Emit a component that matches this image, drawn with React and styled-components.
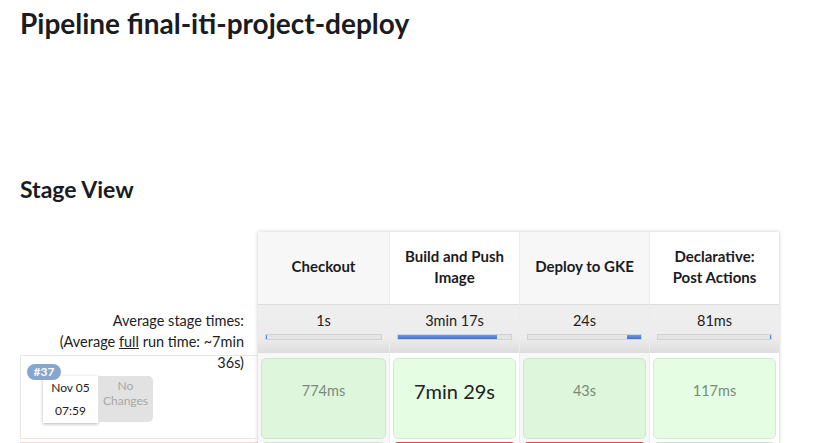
import React from 'react'
import styled, { createGlobalStyle } from 'styled-components'

const GlobalStyle = createGlobalStyle`
  body {
    margin: 0;
    background: #fff;
    color: #1b1b22;
    font-family: Lato, "Noto Sans", sans-serif;
    overflow: hidden;
  }
`

const Page = styled.div`
  padding: 0 20px;
`

const Title = styled.h1`
  font-size: 28px;
  line-height: 34px;
  font-weight: 700;
  margin: 6px 0 0;
`

const SectionTitle = styled.h2`
  font-size: 23px;
  line-height: 28px;
  font-weight: 700;
  margin: 135px 0 0;
`

const StageView = styled.div`
  display: flex;
  margin-top: 29px;
  font-size: 14.5px;
`

const Labels = styled.div`
  width: 238px;
  display: flex;
  flex-direction: column;
`

const LabelHead = styled.div`
  height: 72px;
`

const AvgLabel = styled.div`
  height: 49px;
  box-sizing: border-box;
  padding: 6px 14px 0 34px;
  text-align: right;
  line-height: 21px;
  color: #222;
  position: relative;
  z-index: 1;

  u {
    text-decoration: underline;
  }
`

const RunRow = styled.div`
  height: 84px;
  box-sizing: border-box;
  margin-top: 2px;
  border: 1px solid #e6e6e6;
  position: relative;
  display: flex;
  padding: 20px 0 0 22px;
`

const NextRunRow = styled.div`
  height: 40px;
  margin-top: 3px;
  background: #fde6e3;
  border-top: 1px solid #f7d3cf;
`

const Badge = styled.span`
  position: absolute;
  left: 6px;
  top: 8px;
  z-index: 2;
  width: 34px;
  height: 16px;
  border-radius: 8px;
  background: #86a6cf;
  color: #fff;
  font-weight: 700;
  font-size: 12px;
  line-height: 16px;
  text-align: center;
`

const DateBox = styled.div`
  width: 55px;
  height: 47px;
  box-sizing: border-box;
  background: #fff;
  box-shadow: 0 1px 3px rgba(0, 0, 0, 0.3);
  font-size: 12px;
  line-height: 23px;
  text-align: center;
  color: #222;
`

const Changes = styled.div`
  width: 55px;
  height: 46px;
  background: #e2e2e2;
  border-radius: 0 5px 5px 0;
  color: #a8a8a8;
  font-size: 12px;
  line-height: 15px;
  text-align: center;
  padding-top: 2px;
  box-sizing: border-box;
`

const Stages = styled.div`
  display: grid;
  grid-template-columns: 131px repeat(3, 130px);
  box-shadow: 0 0 4px rgba(0, 0, 0, 0.22);
`

const Column = styled.div`
  display: flex;
  flex-direction: column;
  background: ${(p) => (p.$shade ? '#f7f7f7' : '#fff')};
  border-left: ${(p) => (p.$first ? 'none' : '1px solid #ececec')};
`

const Head = styled.div`
  height: 72px;
  box-sizing: border-box;
  display: flex;
  align-items: center;
  justify-content: center;
  text-align: center;
  font-weight: 700;
  font-size: 15px;
  line-height: 21px;
  padding: 0 12px 3px;
`

const Avg = styled.div`
  height: 49px;
  box-sizing: border-box;
  border-top: 1px solid #dcdcdc;
  background: linear-gradient(#efefef 0%, #ececec 70%, #dddddd 100%);
  padding: 7px 7px 0;
  text-align: center;
  color: #222;
`

const Track = styled.div`
  height: 4px;
  margin-top: 5px;
  background: #e4e4e4;
  border: 1px solid #d2d2d2;
  overflow: hidden;
`

const Fill = styled.div`
  height: 100%;
  background: linear-gradient(#6b9be0, #3f75c8);
`

const CellWrap = styled.div`
  height: 87px;
  box-sizing: border-box;
  padding: 5px 3px 1px;
`

const Cell = styled.div`
  height: 100%;
  box-sizing: border-box;
  padding-top: 19px;
  border-radius: 5px;
  border: 1px solid ${(p) => (p.$shade ? '#cde5cb' : '#d2ecd2')};
  background: ${(p) => (p.$shade ? '#ddf6dc' : '#e4fde3')};
  text-align: center;
  line-height: 26px;
  color: ${(p) => (p.$big ? '#222' : '#7b8a7b')};
  font-size: ${(p) => (p.$big ? '20px' : '14.5px')};
`

const NextCell = styled.div`
  height: 40px;
  margin: 2px 3px 0;
  border-radius: 5px 5px 0 0;
  border: 1px solid ${(p) => (p.$failed ? '#d94a3f' : '#cde5cb')};
  border-top-width: ${(p) => (p.$failed ? '3px' : '1px')};
  background: ${(p) => (p.$failed ? '#f7d6d2' : '#e4fde3')};
`

const stages = [
  { name: 'Checkout', avg: '1s', fill: [0, 1], time: '774ms' },
  { name: 'Build and Push Image', avg: '3min 17s', fill: [0, 88], time: '7min 29s', big: true, failed: true },
  { name: 'Deploy to GKE', avg: '24s', fill: [88, 12], time: '43s', failed: true },
  { name: 'Declarative: Post Actions', avg: '81ms', fill: [99, 1], time: '117ms' },
]

export default function App() {
  return (
    <Page>
      <GlobalStyle />
      <Title>Pipeline final-iti-project-deploy</Title>
      <SectionTitle>Stage View</SectionTitle>
      <StageView>
        <Labels>
          <LabelHead />
          <AvgLabel>
            Average stage times:
            <br />
            (Average <u>full</u> run time: ~7min 36s)
          </AvgLabel>
          <RunRow>
            <Badge>#37</Badge>
            <DateBox>
              Nov 05
              <br />
              07:59
            </DateBox>
            <Changes>
              No
              <br />
              Changes
            </Changes>
          </RunRow>
          <NextRunRow />
        </Labels>
        <Stages>
          {stages.map((s, i) => (
            <Column key={s.name} $shade={i % 2 === 0} $first={i === 0}>
              <Head>{s.name}</Head>
              <Avg>
                {s.avg}
                <Track>
                  <Fill style={{ marginLeft: s.fill[0] + '%', width: s.fill[1] + '%' }} />
                </Track>
              </Avg>
              <CellWrap>
                <Cell $shade={i % 2 === 0} $big={s.big}>
                  {s.time}
                </Cell>
              </CellWrap>
              <NextCell $failed={s.failed} />
            </Column>
          ))}
        </Stages>
      </StageView>
    </Page>
  )
}
